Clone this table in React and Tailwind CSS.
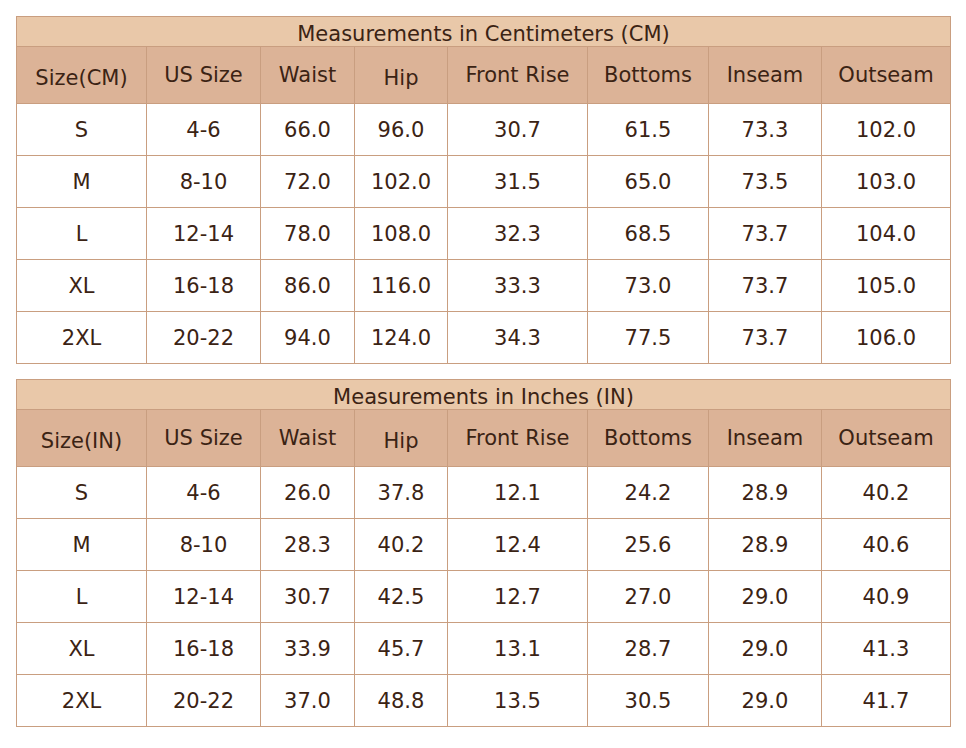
const cols = 'grid-cols-[129px_113px_93px_92px_139px_120px_112px_128px]'

const cmRows = [
  ['S', '4-6', '66.0', '96.0', '30.7', '61.5', '73.3', '102.0'],
  ['M', '8-10', '72.0', '102.0', '31.5', '65.0', '73.5', '103.0'],
  ['L', '12-14', '78.0', '108.0', '32.3', '68.5', '73.7', '104.0'],
  ['XL', '16-18', '86.0', '116.0', '33.3', '73.0', '73.7', '105.0'],
  ['2XL', '20-22', '94.0', '124.0', '34.3', '77.5', '73.7', '106.0'],
]

const inRows = [
  ['S', '4-6', '26.0', '37.8', '12.1', '24.2', '28.9', '40.2'],
  ['M', '8-10', '28.3', '40.2', '12.4', '25.6', '28.9', '40.6'],
  ['L', '12-14', '30.7', '42.5', '12.7', '27.0', '29.0', '40.9'],
  ['XL', '16-18', '33.9', '45.7', '13.1', '28.7', '29.0', '41.3'],
  ['2XL', '20-22', '37.0', '48.8', '13.5', '30.5', '29.0', '41.7'],
]

const SizeTable = ({ title, unit, rows }) => {
  const heads = [`Size(${unit})`, 'US Size', 'Waist', 'Hip', 'Front Rise', 'Bottoms', 'Inseam', 'Outseam']
  return (
    <div className="w-[935px] bg-[#c99e80] p-px flex flex-col gap-px">
      <div className="h-[29px] bg-[#e9c8a9] flex items-center justify-center text-[21px] leading-none pt-[5px]">
        {title}
      </div>
      <div className={`grid ${cols} gap-px`}>
        {heads.map((h, i) => (
          <div
            key={h}
            className={`h-[56px] bg-[#dcb397] flex items-center justify-center text-[21px] ${i === 0 || i === 3 ? 'pt-[8px]' : 'pt-[2px]'}`}
          >
            {h}
          </div>
        ))}
        {rows.map((r) =>
          r.map((c, j) => (
            <div key={r[0] + j} className="h-[51px] bg-white flex items-center justify-center text-[21px] pt-[2px]">
              {c}
            </div>
          ))
        )}
      </div>
    </div>
  )
}

const App = () => {
  return (
    <div className="w-[966px] h-[748px] bg-white pt-4 pl-4 flex flex-col gap-[15px] text-[#3b2314]" style={{ fontFamily: '"DejaVu Sans", Verdana, sans-serif' }}>
      <SizeTable title="Measurements in Centimeters (CM)" unit="CM" rows={cmRows} />
      <SizeTable title="Measurements in Inches (IN)" unit="IN" rows={inRows} />
    </div>
  )
}

export default App
